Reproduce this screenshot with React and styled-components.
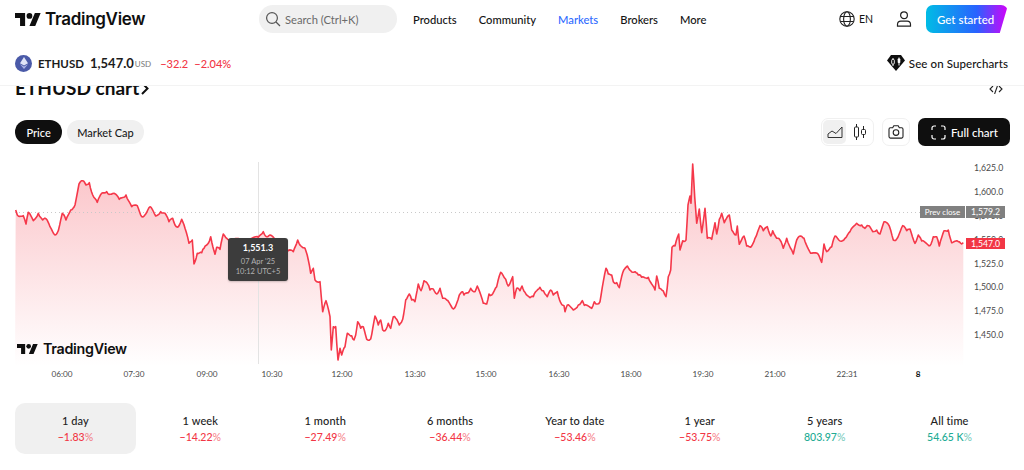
import styled, { createGlobalStyle } from 'styled-components';

const GlobalStyle = createGlobalStyle`
  html, body {
    margin: 0;
    background: #fff;
    overflow: hidden;
  }
  body {
    font-family: Lato, "Noto Sans", sans-serif;
    color: #131722;
  }
`;

// trace of the price line, read off in 3x crop coordinates: [originX, list]
const traces = [
  [0, [47,150,52,165,70,167,78,192,85,157,100,182,115,160,128,180,138,176,150,200,165,225,175,212,187,160,198,180,212,150,225,135,237,72,248,62,258,75,268,68,278,105,292,127,305,100,320,95,330,103,342,100,358,118,378,105,395,140,412,137,425,170,437,162,450,140,467,168,482,155,495,160,507,185,518,175,525,195,535,200,545,178,555,205,567,250,577,240,582,312,592,280,605,278,612,265,625,250,632,230,645,283,650,262,660,268,670,222,680,235,700,238,730,240,775,232,790,215,800,230,810,225,830,245,865,272,880,275,893,240,905,260,915,265,925,300,932,340,940,325,945,360,960,365,968,455,978,422,990,470,994,570,1000,500,1007,500,1014,600,1020,565]],
  [340, [5,585,15,560,22,520,35,527,42,540,47,525,53,485,62,505,70,500,80,538,92,537,105,468,115,495,122,480,128,510,135,512,145,490,152,505,160,470,167,475,178,495,188,478,197,420,208,402,215,420,225,425,235,372,243,392,252,362,262,370,270,390,280,387,290,402,300,385,308,415,320,420,340,447,350,430,358,405,368,395,372,405,385,398,392,385,405,395,412,378,430,430,440,432,447,402,455,405,470,380,482,337,497,358,505,378,518,350,523,415,530,385,540,392,546,378,555,397,570,413,580,410,590,392,600,382,610,392,622,410,632,390,640,405,652,395,662,428,672,437,675,455,682,435,700,450,715,435,727,422,733,436,755,445,763,425,772,432,780,425,790,365,798,325,805,342,815,345,820,365,830,368,838,383,848,338,862,318,872,332,885,335,895,345,905,352,925,352,945,390,950,348,958,385,970,393,978,410,985,350,992,330,996,262,1005,258,1016,222]],
  [680, [0,270,8,242,18,240,24,135,30,108,33,130,38,12,44,110,50,190,58,147,65,218,75,145,82,235,95,238,105,188,110,222,118,178,125,160,133,188,148,165,155,210,168,225,172,198,178,253,192,228,200,258,212,262,225,235,240,197,250,212,262,200,272,228,278,212,290,235,300,240,310,265,320,235,335,270,340,282,350,240,362,228,372,235,392,280,415,283,425,307,432,252,440,275,455,260,465,228,480,243,495,235,510,215,530,190,545,195,555,205,565,197,578,215,590,210,600,222,612,185,628,198,640,240,650,237,668,197,680,212,690,207,705,250,715,225,725,243,750,257,760,230,770,230,778,258,792,212,805,210,815,248,835,245,845,252,850,248]],
];

const buildPrice = () => {
  const raw = [];
  traces.forEach(([ox, list]) => {
    for (let i = 0; i < list.length; i += 2) raw.push([ox + list[i] / 3, 160 + list[i + 1] / 3]);
  });
  const out = [];
  let n = 0;
  for (let i = 0; i < raw.length - 1; i++) {
    const [x0, y0] = raw[i];
    const [x1, y1] = raw[i + 1];
    const steps = Math.max(1, Math.round((x1 - x0) / 1.2));
    for (let s = 0; s < steps; s++) {
      const t = s / steps;
      n += 1;
      const wob = s === 0 ? 0 : Math.sin(n * 12.9898) * 1.1;
      out.push([x0 + (x1 - x0) * t, y0 + (y1 - y0) * t + wob]);
    }
  }
  out.push(raw[raw.length - 1]);
  return out;
};

const price = buildPrice();
const linePoints = price.map(([x, y]) => `${x.toFixed(1)},${y.toFixed(1)}`).join(' ');
const lastX = price[price.length - 1][0].toFixed(1);
const areaPoints = `15,366 ${linePoints} ${lastX},366`;

const timeTicks = [
  ['06:00', 62], ['07:30', 134], ['09:00', 207], ['10:30', 272], ['12:00', 342], ['13:30', 415], ['15:00', 486],
  ['16:30', 559], ['18:00', 631], ['19:30', 703], ['21:00', 775], ['22:31', 847], ['8', 918],
];
const priceTicks = [
  ['1,625.0', 168], ['1,600.0', 192], ['1,575.0', 216], ['1,550.0', 240],
  ['1,525.0', 264], ['1,500.0', 287], ['1,475.0', 311], ['1,450.0', 335],
];
const navItems = ['Products', 'Community', 'Markets', 'Brokers', 'More'];
const periods = [
  { label: '1 day', value: '−1.83', active: true },
  { label: '1 week', value: '−14.22' },
  { label: '1 month', value: '−27.49' },
  { label: '6 months', value: '−36.44' },
  { label: 'Year to date', value: '−53.46' },
  { label: '1 year', value: '−53.75' },
  { label: '5 years', value: '803.97', up: true },
  { label: 'All time', value: '54.65', suffix: ' K', up: true },
];

const Page = styled.div`
  width: 1024px;
  height: 470px;
  overflow: hidden;
`;

const Header = styled.header`
  height: 85px;
  border-bottom: 1px solid #f3f3f3;
  padding: 0 15px;
  display: flex;
  flex-direction: column;
`;

const TopRow = styled.div`
  height: 38px;
  display: flex;
  align-items: center;
`;

const Brand = styled.div`
  width: 244px;
  display: flex;
  align-items: center;
  gap: 4px;
`;

const Wordmark = styled.span`
  font-family: Inter, sans-serif;
  font-weight: 600;
  font-size: ${(p) => p.$size}px;
  letter-spacing: -0.3px;
  line-height: 1;
  color: #0f0f0f;
`;

const Search = styled.div`
  width: 138px;
  height: 28px;
  border-radius: 14px;
  background: #f0f0f0;
  display: flex;
  align-items: center;
  gap: 4px;
  padding-left: 6px;
  box-sizing: border-box;
  font-size: 11.2px;
  color: #6a6a6a;
`;

const Nav = styled.nav`
  display: flex;
  gap: 22px;
  margin-left: 16px;
`;

const NavItem = styled.span`
  font-size: 11.2px;
  font-weight: 500;
  color: ${(p) => (p.$active ? '#2f6bff' : '#131313')};
`;

const Locale = styled.div`
  margin-left: auto;
  display: flex;
  align-items: center;
  gap: 4px;
  font-size: 10.5px;
  color: #131313;
`;

const UserButton = styled.div`
  margin-left: 23px;
  display: flex;
`;

const GetStarted = styled.div`
  margin-left: 14px;
  margin-right: 1px;
  width: 82px;
  height: 28px;
  border-radius: 7px;
  background: linear-gradient(90deg, #00bce5 0%, #2962ff 62%, #d500f9 100%);
  clip-path: polygon(0 0, 100% 0, 90% 100%, 0 100%);
  color: #fff;
  font-size: 11.5px;
  font-weight: 500;
  display: flex;
  align-items: center;
  padding-left: 11px;
  box-sizing: border-box;
`;

const SymbolRow = styled.div`
  flex: 1;
  display: flex;
  align-items: center;
  padding-top: 3px;
`;

const CoinIcon = styled.span`
  width: 17px;
  height: 17px;
  border-radius: 50%;
  background: #4a5aa8;
  display: flex;
  align-items: center;
  justify-content: center;
  margin-right: 6px;
`;

const Ticker = styled.span`
  font-size: 11.5px;
  font-weight: 700;
  margin-right: 6px;
  color: #1c1c1c;
`;

const LastPrice = styled.span`
  font-size: 13px;
  font-weight: 700;
  color: #1c1c1c;
`;

const Currency = styled.span`
  font-size: 8px;
  color: #777;
  margin: 2px 9px 0 1px;
`;

const Change = styled.span`
  font-size: 11px;
  font-weight: 500;
  color: #f23645;
  margin-right: 6px;
`;

const Supercharts = styled.div`
  margin-left: auto;
  margin-right: 1px;
  display: flex;
  align-items: center;
  gap: 4px;
  font-size: 11.5px;
  font-weight: 500;
  letter-spacing: 0.1px;
  color: #131313;
`;

const TitleRow = styled.div`
  height: 14px;
  padding: 0 21px 0 15px;
  overflow: hidden;
  display: flex;
  justify-content: space-between;
  align-items: flex-end;
`;

const Title = styled.h2`
  margin: 0;
  font-size: 19px;
  font-weight: 700;
  line-height: 24px;
  color: #0f0f0f;
  display: flex;
  align-items: center;
  gap: 2px;
`;

const EmbedIcon = styled.svg`
  margin-bottom: 6px;
`;

const Toolbar = styled.div`
  margin-top: 18px;
  padding: 0 14px 0 15px;
  height: 28px;
  display: flex;
  align-items: center;
`;

const Pills = styled.div`
  display: flex;
  gap: 5px;
`;

const Pill = styled.span`
  height: 24px;
  padding: 0 ${(p) => (p.$active ? 11.5 : 10)}px;
  border-radius: 12px;
  display: flex;
  align-items: center;
  font-size: 11px;
  font-weight: 500;
  background: ${(p) => (p.$active ? '#0f0f0f' : '#f0f0f0')};
  color: ${(p) => (p.$active ? '#fff' : '#1c1c1c')};
`;

const ChartTools = styled.div`
  margin-left: auto;
  display: flex;
  align-items: center;
  gap: 8px;
`;

const ToolGroup = styled.div`
  height: 28px;
  box-sizing: border-box;
  border: 1px solid #f0f0f0;
  border-radius: 7px;
  padding: 1px;
  display: flex;
  gap: 2px;
`;

const ToolButton = styled.span`
  width: ${(p) => (p.$wide ? 24 : 23)}px;
  border-radius: 5px;
  background: ${(p) => (p.$active ? '#f0f0f0' : 'transparent')};
  display: flex;
  align-items: center;
  justify-content: center;
`;

const FullChart = styled.div`
  width: 92px;
  height: 28px;
  box-sizing: border-box;
  padding-left: 13px;
  border-radius: 7px;
  background: #0f0f0f;
  color: #fff;
  font-size: 11.5px;
  font-weight: 500;
  display: flex;
  align-items: center;
  gap: 5px;
`;

const ChartPanel = styled.div`
  position: relative;
  margin-top: 14px;
  height: 220px;
`;

const ChartSvg = styled.svg`
  display: block;
`;

const AxisText = styled.text`
  font-family: Lato, sans-serif;
  font-size: ${(p) => p.$size}px;
  fill: ${(p) => (p.$strong ? '#111' : '#4a4a4a')};
  font-weight: ${(p) => (p.$strong ? 700 : 400)};
`;

const PriceTag = styled.div`
  position: absolute;
  top: ${(p) => p.$top}px;
  left: ${(p) => p.$left}px;
  width: ${(p) => p.$width}px;
  height: ${(p) => p.$height}px;
  background: ${(p) => p.$bg};
  color: #fff;
  font-size: ${(p) => p.$size}px;
  line-height: ${(p) => p.$height}px;
  text-align: center;
`;

const Tooltip = styled.div`
  position: absolute;
  left: 228px;
  top: 78px;
  width: 60px;
  height: 43px;
  border-radius: 3px;
  background: #3c3c3c;
  box-shadow: 0 1px 2px rgba(0, 0, 0, 0.2);
  display: flex;
  flex-direction: column;
  align-items: center;
  font-size: 7.5px;
  line-height: 10px;
  color: #b2b2b2;
  padding-top: 5px;
  box-sizing: border-box;
`;

const TooltipValue = styled.span`
  color: #fff;
  font-weight: 700;
  font-size: 9px;
  margin-bottom: 4px;
`;

const Watermark = styled.div`
  position: absolute;
  left: 17px;
  top: 182px;
  display: flex;
  align-items: center;
  gap: 5px;
`;

const Periods = styled.div`
  margin-top: 23px;
  padding: 0 14px 0 15px;
  display: grid;
  grid-template-columns: repeat(8, 1fr);
  gap: 4px;
`;

const Period = styled.div`
  height: 51px;
  border-radius: 10px;
  background: ${(p) => (p.$active ? '#f0f0f0' : 'transparent')};
  display: flex;
  flex-direction: column;
  align-items: center;
  justify-content: center;
  gap: 2px;
`;

const PeriodLabel = styled.span`
  font-size: 11px;
  letter-spacing: 0.1px;
  line-height: 15px;
  font-weight: 500;
  color: #222;
`;

const PeriodValue = styled.span`
  font-size: 10.5px;
  line-height: 15px;
  font-weight: 500;
  color: ${(p) => (p.$up ? '#22ab94' : '#f23645')};
`;

const Percent = styled.span`
  opacity: 0.6;
`;

const LogoMark = ({ width }) => (
  <svg width={width} height={width / 2} viewBox="0 4 36 18" fill="#0f0f0f">
    <path d="M14 22H7V11H0V4h14v18zM28 22h-8l7.5-18h8L28 22z" />
    <circle cx="20" cy="8" r="4" />
  </svg>
);

const SearchIcon = () => (
  <svg width="16" height="16" viewBox="0 0 16 16" fill="none" stroke="#555" strokeWidth="1.2">
    <circle cx="7" cy="7" r="5.4" />
    <path d="M11 11l4 4" />
  </svg>
);

const GlobeIcon = () => (
  <svg width="16" height="16" viewBox="0 0 16 16" fill="none" stroke="#222" strokeWidth="1.1">
    <circle cx="8" cy="8" r="7.2" />
    <ellipse cx="8" cy="8" rx="3.4" ry="7.2" />
    <path d="M1.4 5.5h13.2M1.4 10.5h13.2" />
  </svg>
);

const UserIcon = () => (
  <svg width="16" height="16" viewBox="0 0 16 16" fill="none" stroke="#222" strokeWidth="1.2">
    <circle cx="8" cy="4.2" r="3.4" />
    <path d="M1.5 15.2v-1.6c0-2 1.6-3.4 3.4-3.4h6.2c1.8 0 3.4 1.4 3.4 3.4v1.6z" />
  </svg>
);

const EthGlyph = () => (
  <svg width="8" height="12" viewBox="0 0 8 12">
    <path d="M4 0L0 6.2 4 8.4 8 6.2z" fill="#dfe4f7" />
    <path d="M0 7.2L4 12l4-4.8-4 2.2z" fill="#aab4e6" />
  </svg>
);

const GemIcon = () => (
  <svg width="18" height="16" viewBox="0 0 18 16">
    <path d="M4 0h10l4 5.5L9 16 0 5.5z" fill="#0f0f0f" />
    <path d="M6 3v8M12 2.5v8" stroke="#fff" strokeWidth="1" />
    <rect x="4.7" y="4.5" width="2.6" height="4.5" rx="0.8" fill="#0f0f0f" stroke="#fff" strokeWidth="0.9" />
    <rect x="10.7" y="3.5" width="2.6" height="4.5" rx="0.8" fill="#fff" />
  </svg>
);

const AreaIcon = () => (
  <svg width="16" height="12" viewBox="0 0 16 12" fill="none" stroke="#333" strokeWidth="1">
    <path d="M1 11.5V8l4-3 4 2.5L15 1v10.5z" />
  </svg>
);

const CandleIcon = () => (
  <svg width="14" height="16" viewBox="0 0 14 16" fill="none" stroke="#222" strokeWidth="1">
    <path d="M3.5 0v3M3.5 13v3M10.5 2v3.5M10.5 10.5V14" />
    <rect x="1.5" y="3" width="4" height="10" rx="1" />
    <rect x="8.5" y="5.5" width="4" height="5" rx="1" />
  </svg>
);

const CameraIcon = () => (
  <svg width="16" height="14" viewBox="0 0 16 14" fill="none" stroke="#222" strokeWidth="1.1">
    <path d="M1 4.2c0-.9.6-1.4 1.4-1.4h2.3L5.8.8h4.4l1.1 2h2.3c.8 0 1.4.5 1.4 1.4v7.4c0 .9-.6 1.5-1.4 1.5H2.4c-.8 0-1.4-.6-1.4-1.5z" />
    <circle cx="8" cy="7.6" r="2.8" />
  </svg>
);

const FullscreenIcon = () => (
  <svg width="15" height="15" viewBox="0 0 15 15" fill="none" stroke="#fff" strokeWidth="1.2">
    <path d="M1 5V3a2 2 0 0 1 2-2h2M10 1h2a2 2 0 0 1 2 2v2M14 10v2a2 2 0 0 1-2 2h-2M5 14H3a2 2 0 0 1-2-2v-2" />
  </svg>
);

const Chevron = () => (
  <svg width="8" height="13" viewBox="0 0 8 13" fill="none" stroke="#0f0f0f" strokeWidth="2">
    <path d="M1 1l5.5 5.5L1 12" />
  </svg>
);

const PriceChart = () => (
  <ChartSvg width="1024" height="220" viewBox="0 160 1024 220">
    <defs>
      <linearGradient id="areaFill" x1="0" y1="165" x2="0" y2="366" gradientUnits="userSpaceOnUse">
        <stop offset="0" stopColor="#f23645" stopOpacity="0.3" />
        <stop offset="1" stopColor="#f23645" stopOpacity="0" />
      </linearGradient>
    </defs>
    <polygon points={areaPoints} fill="url(#areaFill)" />
    <line x1="15" x2="920" y1="212.5" y2="212.5" stroke="#c9c9c9" strokeWidth="1" strokeDasharray="1 3" />
    <line x1="258.5" x2="258.5" y1="162" y2="364" stroke="#e3e3e3" strokeWidth="1" />
    <polyline points={linePoints} fill="none" stroke="#f5384a" strokeWidth="1.6" strokeLinejoin="round" />
    {priceTicks.map(([label, y]) => (
      <AxisText key={label} x="974" y={y + 3} $size={8.7}>{label}</AxisText>
    ))}
    {timeTicks.map(([label, x]) => (
      <AxisText key={label} x={x} y="377" textAnchor="middle" $size={8.2} $strong={label === '8'}>{label}</AxisText>
    ))}
  </ChartSvg>
);

export default function App() {
  return (
    <Page>
      <GlobalStyle />
      <Header>
        <TopRow>
          <Brand>
            <LogoMark width={26} />
            <Wordmark $size={17}>TradingView</Wordmark>
          </Brand>
          <Search>
            <SearchIcon />
            Search (Ctrl+K)
          </Search>
          <Nav>
            {navItems.map((item) => (
              <NavItem key={item} $active={item === 'Markets'}>{item}</NavItem>
            ))}
          </Nav>
          <Locale>
            <GlobeIcon />
            EN
          </Locale>
          <UserButton>
            <UserIcon />
          </UserButton>
          <GetStarted>Get started</GetStarted>
        </TopRow>
        <SymbolRow>
          <CoinIcon>
            <EthGlyph />
          </CoinIcon>
          <Ticker>ETHUSD</Ticker>
          <LastPrice>1,547.0</LastPrice>
          <Currency>USD</Currency>
          <Change>−32.2</Change>
          <Change>−2.04%</Change>
          <Supercharts>
            <GemIcon />
            See on Supercharts
          </Supercharts>
        </SymbolRow>
      </Header>

      <TitleRow>
        <Title>
          ETHUSD chart
          <Chevron />
        </Title>
        <EmbedIcon width="14" height="8" viewBox="0 0 14 8" fill="none" stroke="#222" strokeWidth="1.1">
          <path d="M4 0L1 3l3 3M10 0l3 3-3 3M8.4 0L5.6 8" />
        </EmbedIcon>
      </TitleRow>

      <Toolbar>
        <Pills>
          <Pill $active>Price</Pill>
          <Pill>Market Cap</Pill>
        </Pills>
        <ChartTools>
          <ToolGroup>
            <ToolButton $active><AreaIcon /></ToolButton>
            <ToolButton $wide><CandleIcon /></ToolButton>
          </ToolGroup>
          <ToolGroup>
            <ToolButton $wide><CameraIcon /></ToolButton>
          </ToolGroup>
          <FullChart>
            <FullscreenIcon />
            Full chart
          </FullChart>
        </ChartTools>
      </Toolbar>

      <ChartPanel>
        <PriceChart />
        <PriceTag $top={46} $left={920} $width={45} $height={12} $size={8} $bg="#808080">Prev close</PriceTag>
        <PriceTag $top={46} $left={966} $width={39} $height={12} $size={8.7} $bg="#808080">1,579.2</PriceTag>
        <PriceTag $top={78} $left={966} $width={39} $height={11} $size={8.7} $bg="#f23645">1,547.0</PriceTag>
        <Tooltip>
          <TooltipValue>1,551.3</TooltipValue>
          <span>07 Apr '25</span>
          <span>10:12 UTC+5</span>
        </Tooltip>
        <Watermark>
          <LogoMark width={21} />
          <Wordmark $size={14.3}>TradingView</Wordmark>
        </Watermark>
      </ChartPanel>

      <Periods>
        {periods.map((p) => (
          <Period key={p.label} $active={p.active}>
            <PeriodLabel>{p.label}</PeriodLabel>
            <PeriodValue $up={p.up}>
              {p.value}{p.suffix}<Percent>%</Percent>
            </PeriodValue>
          </Period>
        ))}
      </Periods>
    </Page>
  );
}
